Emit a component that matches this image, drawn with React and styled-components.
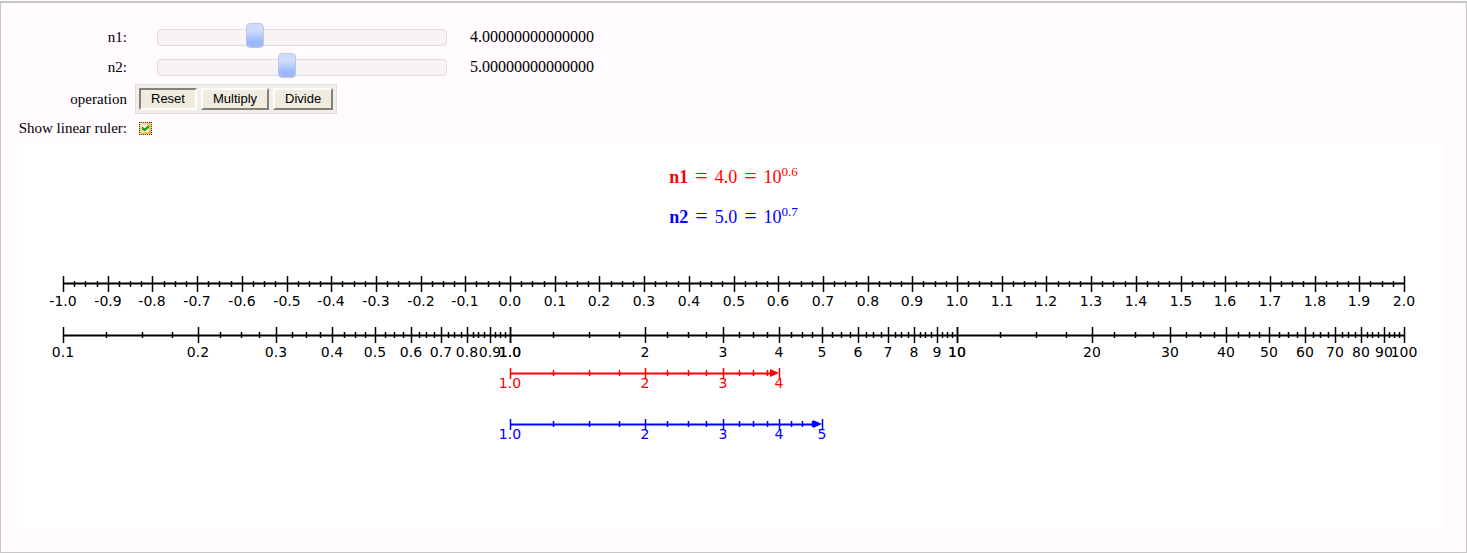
import React, { useState } from "react";
import styled, { createGlobalStyle, css } from "styled-components";

const GlobalStyle = createGlobalStyle`
  body {
    margin: 0;
    background: #ffffff;
    color: #000000;
    font-family: "Liberation Serif", "Times New Roman", serif;
  }
`;

const Frame = styled.main`
  margin-top: 1px;
  padding: 19px 22px 22px;
  border: 1px solid #c6c6c6;
  border-top-width: 2px;
  background: #fffbff;
`;

const Controls = styled.div`
  display: flex;
  flex-direction: column;
  height: 122px;
`;

const Row = styled.div`
  display: flex;
  align-items: center;
  height: ${(p) => p.$height};
`;

const RowLabel = styled.label`
  display: flex;
  justify-content: flex-end;
  width: 104px;
  margin-right: 8px;
  font-size: 15px;
  line-height: 18px;
  white-space: nowrap;
`;

const Track = styled.div`
  width: 288px;
  height: 15px;
  margin: 0 23px 0 22px;
  border: 1px solid #dddddd;
  border-radius: 4px;
  background: #f7f3f7;
`;

const thumb = css`
  box-sizing: border-box;
  width: 18px;
  height: 25px;
  border: 1px solid #c8c8cc;
  border-radius: 4px;
  background: linear-gradient(#cedbff 0%, #cedbff 30%, #9cbaff 75%, #9cbaff 100%);
`;

const Range = styled.input`
  display: block;
  appearance: none;
  width: calc(100% + 20px);
  height: 25px;
  margin: -7px -11px -3px -9px;
  background: transparent;
  &::-webkit-slider-thumb {
    appearance: none;
    ${thumb}
  }
  &::-moz-range-thumb {
    ${thumb}
  }
`;

const Value = styled.output`
  font-size: 16px;
  line-height: 18px;
`;

const ButtonBar = styled.div`
  display: flex;
  gap: 4px;
  padding: 3px;
  border: 1px solid #dedede;
  background: #eeeeee;
`;

const OperationButton = styled.button`
  box-sizing: border-box;
  height: 22px;
  padding: 0 10px;
  border: 2px solid;
  border-color: ${(p) =>
    p.$pressed ? "#848273 #fffff7 #fffff7 #848273" : "#fffff7 #848273 #848273 #fffff7"};
  background: #efebde;
  color: #000000;
  font-family: "Liberation Sans", Arial, sans-serif;
  font-size: 13px;
  line-height: 18px;
`;

const CheckBox = styled.input`
  appearance: none;
  display: grid;
  place-content: center;
  box-sizing: border-box;
  width: 13px;
  height: 13px;
  margin: 0 4px;
  border: 1px dotted #21396b;
  background: linear-gradient(135deg, #ffe7a5, #ffa829);
  &::before {
    content: "";
    grid-area: 1 / 1;
    width: 7px;
    height: 7px;
    background: #f7f7f4;
  }
  &:checked::after {
    content: "";
    grid-area: 1 / 1;
    width: 7px;
    height: 7px;
    background: #21a121;
    clip-path: polygon(0 30%, 40% 55%, 100% 0, 100% 45%, 40% 100%, 0 75%);
  }
`;

const Figure = styled.section`
  background: #ffffff;
`;

const Formulas = styled.div`
  display: flex;
  flex-direction: column;
  align-items: center;
  gap: 16px;
  padding-top: 20px;
  height: 76px;
`;

const Formula = styled.div`
  display: flex;
  align-items: baseline;
  gap: 7px;
  height: 24px;
  color: ${(p) => p.$color};
  font-size: 18px;
  line-height: 24px;
`;

const Equals = styled.span`
  font-size: 22px;
`;

const Exponent = styled.sup`
  position: relative;
  top: -7px;
  vertical-align: baseline;
  font-size: 13px;
  line-height: 1;
`;

const Chart = styled.svg`
  display: block;
  width: 100%;
  height: auto;
  font-family: "DejaVu Sans", sans-serif;
  font-size: 14px;
  text-anchor: middle;
`;

const DECADE = 447;
const ORIGIN = 487;
const position = (exponent) => ORIGIN + Math.round(exponent * DECADE);

function Axis({ from, to, y, color }) {
  return <line x1={from} x2={to} y1={y} y2={y} stroke={color} strokeWidth="2" />;
}

function Tick({ x, y, up, down, color }) {
  return <line x1={x + 0.5} x2={x + 0.5} y1={y - up} y2={y + down} stroke={color} strokeWidth="1.5" />;
}

function LinearRuler({ y }) {
  const ticks = [];
  for (let i = 0; i <= 120; i++) {
    const exponent = i / 40 - 1;
    const major = i % 4 === 0;
    const x = position(exponent);
    ticks.push(
      <g key={i}>
        <Tick x={x} y={y} up={major ? 8 : 3} down={major ? 8 : 3} color="#000000" />
        {major && <text x={x} y={y + 22}>{exponent.toFixed(1)}</text>}
      </g>
    );
  }
  return (
    <g>
      <Axis from={position(-1)} to={position(2) + 1} y={y - 0.4} color="#000000" />
      {ticks}
    </g>
  );
}

function logTicks(first, last) {
  const ticks = [];
  for (let decade = first; decade < last; decade++) {
    for (let q = 4; q <= 40; q++) {
      ticks.push({ value: (q / 4) * 10 ** decade, major: q % 4 === 0, decade });
    }
  }
  return ticks;
}

const tickText = (value, decade) =>
  decade < 0 || Math.abs(value - 1) < 0.001 ? value.toFixed(1) : value.toFixed(0);

function LogRuler({ y }) {
  return (
    <g>
      <Axis from={position(-1)} to={position(2) + 1} y={y + 0.4} color="#000000" />
      {logTicks(-1, 2).map(({ value, major, decade }, i) => {
        const x = position(Math.log10(value));
        return (
          <g key={i}>
            <Tick x={x} y={y} up={major ? 8 : 3} down={major ? 8 : 3} color="#000000" />
            {major && <text x={x} y={y + 22}>{tickText(value, decade)}</text>}
          </g>
        );
      })}
    </g>
  );
}

function NumberArrow({ y, value, shift, color }) {
  const end = position(Math.log10(value) + shift);
  return (
    <g fill={color}>
      <Axis from={position(shift)} to={end - 4} y={y + 0.4} color={color} />
      <path d={`M${end - 9} ${y - 4}L${end} ${y}L${end - 9} ${y + 4}Z`} />
      {logTicks(0, 1)
        .filter((t) => t.value <= value)
        .map((t) => {
          const x = position(Math.log10(t.value) + shift);
          return (
            <g key={t.value}>
              <Tick x={x} y={y} up={t.major ? 5 : 3} down={t.major ? 6 : 3} color={color} />
              {t.major && <text x={x} y={y + 15}>{tickText(t.value, 0)}</text>}
            </g>
          );
        })}
    </g>
  );
}

function SliderRow({ id, value, onChange }) {
  return (
    <Row $height="30px">
      <RowLabel htmlFor={id}>{id}:</RowLabel>
      <Track>
        <Range
          id={id}
          type="range"
          min="1"
          max="10"
          step="0.1"
          value={value}
          onChange={(e) => onChange(Number(e.target.value))}
        />
      </Track>
      <Value htmlFor={id}>{value.toFixed(14)}</Value>
    </Row>
  );
}

function Power({ name, value, color }) {
  return (
    <Formula $color={color}>
      <b>{name}</b>
      <Equals>=</Equals>
      <span>{value.toFixed(1)}</span>
      <Equals>=</Equals>
      <span>
        10<Exponent>{Math.log10(value).toFixed(1)}</Exponent>
      </span>
    </Formula>
  );
}

const OPERATIONS = ["Reset", "Multiply", "Divide"];

export default function App() {
  const [n1, setN1] = useState(4);
  const [n2, setN2] = useState(5);
  const [operation, setOperation] = useState("Reset");
  const [linear, setLinear] = useState(true);

  const shifts = {
    Reset: 0,
    Multiply: Math.log10(n1),
    Divide: Math.log10(n1) - Math.log10(n2),
  };

  return (
    <>
      <GlobalStyle />
      <Frame>
        <Controls>
          <SliderRow id="n1" value={n1} onChange={setN1} />
          <SliderRow id="n2" value={n2} onChange={setN2} />
          <Row $height="34px">
            <RowLabel as="span" id="operation">operation</RowLabel>
            <ButtonBar role="group" aria-labelledby="operation">
              {OPERATIONS.map((name) => (
                <OperationButton
                  key={name}
                  type="button"
                  $pressed={name === operation}
                  aria-pressed={name === operation}
                  onClick={() => setOperation(name)}
                >
                  {name}
                </OperationButton>
              ))}
            </ButtonBar>
          </Row>
          <Row $height="24px">
            <RowLabel htmlFor="linear">Show linear ruler:</RowLabel>
            <CheckBox
              id="linear"
              type="checkbox"
              checked={linear}
              onChange={(e) => setLinear(e.target.checked)}
            />
          </Row>
        </Controls>
        <Figure>
          <Formulas>
            <Power name="n1" value={n1} color="#ff0000" />
            <Power name="n2" value={n2} color="#0000ff" />
          </Formulas>
          <Chart viewBox="0 0 1421 290" role="img" aria-label="Slide rule">
            {linear && <LinearRuler y={44} />}
            <LogRuler y={95} />
            <NumberArrow y={133} value={n1} shift={0} color="#ff0000" />
            <NumberArrow y={184} value={n2} shift={shifts[operation]} color="#0000ff" />
          </Chart>
        </Figure>
      </Frame>
    </>
  );
}
